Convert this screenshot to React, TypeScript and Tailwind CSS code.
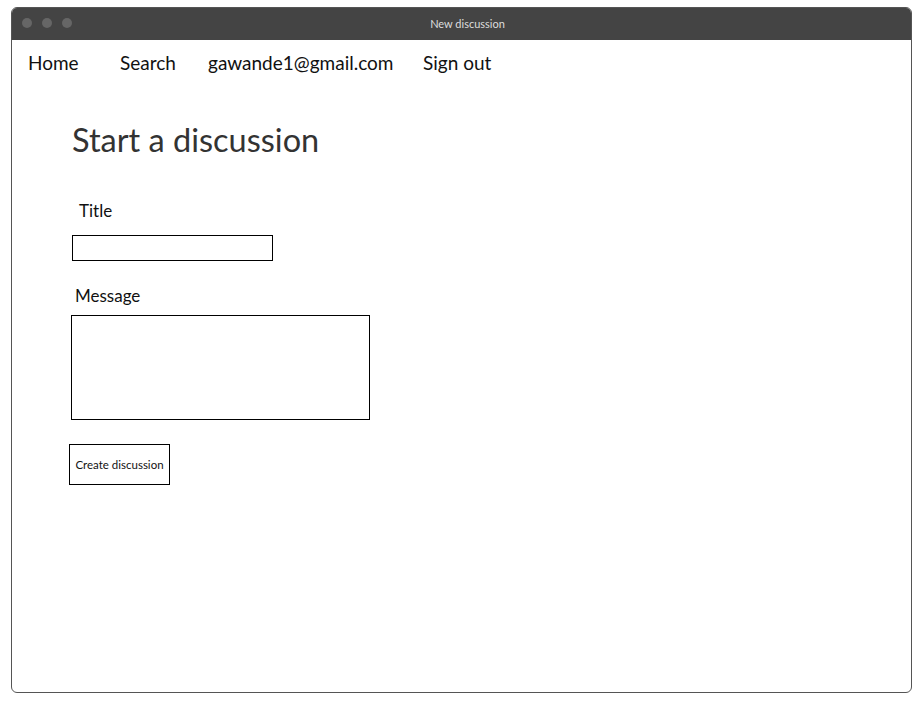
export default function App() {
  const font = { fontFamily: "Lato, 'Noto Sans', sans-serif" }
  return (
    <div className="w-[921px] h-[701px] bg-white pt-[7px] pl-[11px]" style={font}>
      <div className="w-[901px] h-[686px] rounded-[6px] border border-[#555] overflow-hidden flex flex-col bg-white">
        <div className="h-[32px] bg-[#444] relative flex items-center justify-center pl-[12px] shrink-0">
          <div className="absolute left-[10px] top-[10px] flex gap-[10px]">
            <span className="w-[10px] h-[10px] rounded-full bg-[#666]"></span>
            <span className="w-[10px] h-[10px] rounded-full bg-[#666]"></span>
            <span className="w-[10px] h-[10px] rounded-full bg-[#666]"></span>
          </div>
          <span className="text-[11px] text-[#ddd]">New discussion</span>
        </div>

        <nav className="flex items-center h-[46px] pt-[1px] pl-[16px] text-[19px] text-[#111]">
          <span className="w-[92px]">Home</span>
          <span className="w-[88px]">Search</span>
          <span className="w-[215px]">gawande1@gmail.com</span>
          <span>Sign out</span>
        </nav>

        <div className="flex flex-col items-start pl-[60px]">
          <h1 className="mt-[34px] text-[32.5px] leading-[40px] text-[#333]">Start a discussion</h1>
          <label className="mt-[40px] ml-[7px] text-[17px] leading-[22px] text-[#111]">Title</label>
          <div className="mt-[13px] w-[201px] h-[26px] border border-black"></div>
          <label className="mt-[24px] ml-[3px] text-[17px] leading-[22px] text-[#111]">Message</label>
          <div className="mt-[8px] -ml-[1px] w-[299px] h-[105px] border border-black"></div>
          <button className="mt-[24px] -ml-[3px] w-[101px] h-[41px] border border-black flex items-center justify-center text-[11.5px] text-[#111]">
            Create discussion
          </button>
        </div>
      </div>
    </div>
  )
}
